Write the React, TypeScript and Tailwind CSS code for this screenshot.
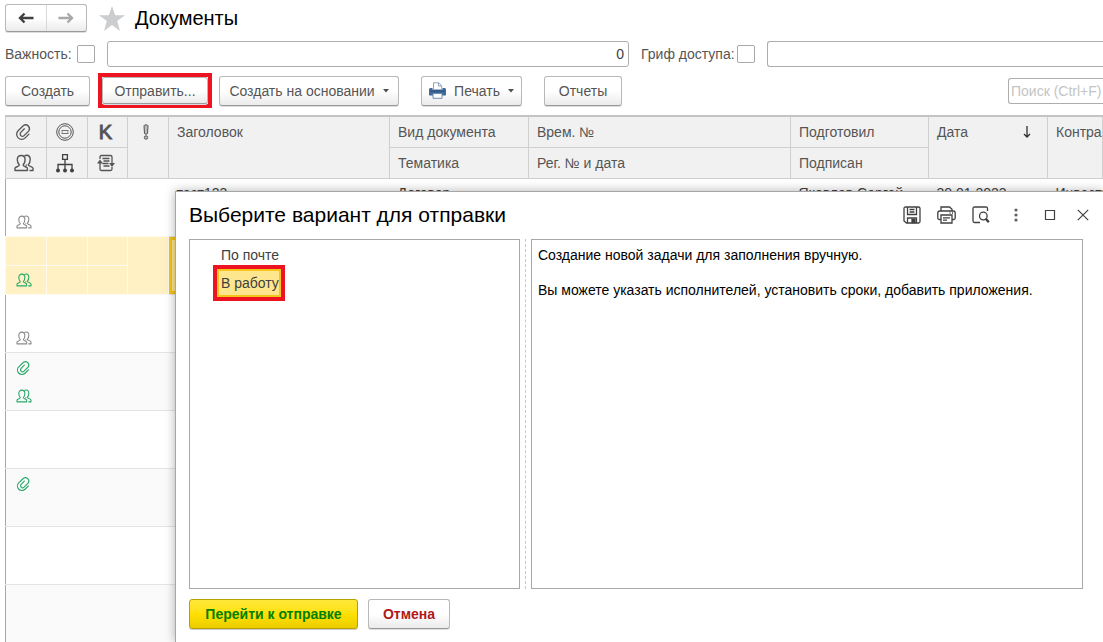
import type { ReactNode } from 'react'
import clsx from 'clsx'

type IconProps = { className?: string }

function ClipIcon({ className }: IconProps) {
  return (
    <svg viewBox="0 0 18 18" className={className} fill="none" stroke="currentColor" strokeWidth="1.3" strokeLinecap="round">
      <path transform="translate(9 9) rotate(45)" d="M5-2V3.300A5 5 0 0 1-5 3.300V-4.200A3.900 3.900 0 0 1 2.600-4.200V2.500A2.300 2.300 0 0 1-2 2.500V-2.500" />
    </svg>
  )
}

function PeopleIcon({ className }: IconProps) {
  return (
    <svg viewBox="0 0 20 18" className={className} fill="none" stroke="currentColor" strokeWidth="1.4" strokeLinejoin="round">
      <path d="M1 16.500v-2.300c0-1.400 4.300-1.500 4.300-3.200C3.900 9.500 3.300 7.800 3.300 5.800c0-2.800 1.500-4.300 3.900-4.300s3.900 1.500 3.900 4.300c0 2-.6 3.700-2 5.200 0 1.700 4.300 1.800 4.300 3.200v2.300z" />
      <path d="M10.500 2c.6-.5 1.300-.7 2.100-.7 2.200 0 3.600 1.500 3.600 4.300 0 2-.6 3.800-1.900 5.300 0 1.200 4.700 1.700 4.700 3.300v2.300h-3.500M12.300 10.500v1.300" />
    </svg>
  )
}

function StampIcon() {
  return (
    <svg viewBox="0 0 18 18" className="size-[18px]" fill="none" stroke="currentColor">
      <circle cx="9" cy="9" r="8.300" />
      <circle cx="9" cy="9" r="6.200" />
      <path d="M5.500 7.500h7M5.500 10.500h7M5.500 9h1.500M11 9h1.500" strokeWidth=".8" />
    </svg>
  )
}

function ImportanceIcon() {
  return (
    <svg viewBox="0 0 6 16" className="h-4 w-1.5" fill="#bdbdbd" stroke="currentColor">
      <path d="M1 1.800c0-1.300 4-1.300 4 0L4.500 9.500c0 .9-3 .9-3 0z" />
      <circle cx="3" cy="13.500" r="1.700" />
    </svg>
  )
}

function TreeIcon() {
  return (
    <svg viewBox="0 0 18 20" className="h-5 w-[18px]" fill="none" stroke="#404040" strokeWidth="1.300">
      <path d="M6.600 1.600h4.800v4.800H6.600zM9 6.500v10M2 16v-4.500h14V16" />
      <g fill="#404040" stroke="none">
        <circle cx="2" cy="17.500" r="2" />
        <circle cx="9" cy="17.500" r="2" />
        <circle cx="16" cy="17.500" r="2" />
      </g>
    </svg>
  )
}

function RouteIcon() {
  return (
    <svg viewBox="0 0 18 18" className="size-[18px]" fill="none" stroke="currentColor" strokeWidth="1.300">
      <path d="M3 5V3c0-1 .5-1.500 1.500-1.500h9c1 0 1.500.5 1.500 1.500v7M15 13v2c0 1-.5 1.500-1.500 1.500h-9c-1 0-1.500-.5-1.500-1.500V8M5.500 4.500h7M6.500 7h6M5.500 9.500h6M6.500 12h6" />
      <path d="M0 9.500l3-4 3 4zM12 9h6l-3 4z" fill="currentColor" stroke="none" />
    </svg>
  )
}

function ArrowLeft({ className }: IconProps) {
  return (
    <svg viewBox="0 0 16 12" className={clsx('h-3 w-4', className)} fill="none" stroke="currentColor" strokeWidth="2.400">
      <path d="M2 6h13.500M6.500 1.500 2 6l4.500 4.500" />
    </svg>
  )
}

function BluePrinter() {
  return (
    <svg viewBox="0 0 17 17" className="size-[17px]">
      <path d="M4.500 7V.8h5.200l3 3V7" fill="#fff" stroke="#8fa5bf" />
      <path d="M9.500.8v3.200h3.200" fill="none" stroke="#8fa5bf" />
      <path d="M1.500 6h2v1.500h10V6h2c.8 0 1.500.6 1.500 1.500v5c0 .6-.4 1-1 1H1c-.6 0-1-.4-1-1v-5C0 6.600.7 6 1.500 6z" fill="#3f6b9c" />
      <path d="M1.500 9h14" stroke="#264f7d" />
      <path d="M4 11.500h9v4.800H4z" fill="#fff" stroke="#6d8db0" />
    </svg>
  )
}

function SaveIcon() {
  return (
    <svg viewBox="0 0 18 18" className="size-[18px]" fill="none" stroke="currentColor" strokeWidth="1.300">
      <path d="M2.500 1h13c1 0 1.500.5 1.500 1.500v13c0 1-.5 1.500-1.500 1.500h-12L1 15V2.500C1 1.500 1.500 1 2.500 1zM4.500 1v7.500h9V1M6.500 3.500h5M6.500 6h5M4.500 17v-5h9v5" />
      <path d="M9 13.500h3v3H9z" fill="currentColor" />
    </svg>
  )
}

function PrintIcon() {
  return (
    <svg viewBox="0 0 19 18" className="h-[18px] w-[19px]" fill="none" stroke="currentColor" strokeWidth="1.300">
      <path d="M4 5V1h8.500L15 3.200V5M4 13.500H2.300C1.300 13.500.8 13 .8 12V7c0-1.300.7-2 2-2h13.400c1.300 0 2 .7 2 2v5c0 1-.5 1.500-1.500 1.500H15" />
      <path d="M4 9h11v8H4zM6 11.800h7M6 14.200h4M12.500 7h1M15 7h1" />
    </svg>
  )
}

function PreviewIcon() {
  return (
    <svg viewBox="0 0 18 18" className="size-[18px]" fill="none" stroke="currentColor" strokeWidth="1.300">
      <path d="M15.500 5V2.500c0-1-.5-1.500-1.500-1.500H2.500C1.500 1 1 1.500 1 2.500v12.500c0 1 .5 1.500 1.500 1.500H8" />
      <circle cx="11.300" cy="10" r="3.800" />
      <path d="m13.800 12.800 3 3.400" strokeWidth="2.400" />
    </svg>
  )
}

function ToolButton({ children, className }: { children: ReactNode; className?: string }) {
  return (
    <button
      className={clsx(
        'flex items-center justify-center rounded-[3px] border border-[#b8b8b8] border-b-[#999] bg-linear-to-b from-white from-50% to-[#ebebeb] shadow-[0_1px_0_#ddd]',
        className,
      )}
    >
      {children}
    </button>
  )
}

function Caret() {
  return (
    <svg viewBox="0 0 6 4" className="h-1 w-1.5" fill="#505050">
      <path d="M0 0h6L3 3.500z" />
    </svg>
  )
}

type Row = { top?: ReactNode; bottom?: ReactNode; selected?: boolean; cells?: string[] }

const green = 'text-[#2aa869]'
const gray = 'text-[#8a8a8a]'

const rows: Row[] = [
  {
    bottom: <PeopleIcon className={clsx('h-3.5 w-4', gray)} />,
    cells: ['тест123', 'Договор', '', 'Яковлев Сергей', '30.01.2023', 'Инвестиции'],
  },
  { bottom: <PeopleIcon className={clsx('h-3.5 w-4', green)} />, selected: true },
  { bottom: <PeopleIcon className={clsx('h-3.5 w-4', gray)} /> },
  {
    top: <ClipIcon className={clsx('size-4', green)} />,
    bottom: <PeopleIcon className={clsx('h-3.5 w-4', green)} />,
  },
  {},
  { top: <ClipIcon className={clsx('size-4', green)} /> },
  {},
  {},
]

const th = 'border border-[#cfcfcf] bg-[#f1f1f1] font-normal text-left align-top overflow-hidden whitespace-nowrap'

function Head({ children, rowSpan, icon }: { children: ReactNode; rowSpan?: number; icon?: boolean }) {
  return (
    <th rowSpan={rowSpan} className={th}>
      <div className={clsx('flex h-[30px] items-center', icon ? 'justify-center pr-1' : 'px-2')}>{children}</div>
    </th>
  )
}

function DocumentsTable() {
  return (
    <table className="w-full table-fixed border-collapse border-l border-[#a8a8a8]">
      <colgroup>
        <col className="w-[41px]" />
        <col className="w-[41px]" />
        <col className="w-[40px]" />
        <col className="w-[41px]" />
        <col className="w-[221px]" />
        <col className="w-[139px]" />
        <col className="w-[262px]" />
        <col className="w-[138px]" />
        <col className="w-[119px]" />
        <col />
      </colgroup>
      <thead className="border-t-2 border-[#c4c4c4] text-[#555]">
        <tr>
          <Head icon><ClipIcon className="size-[18px]" /></Head>
          <Head icon><StampIcon /></Head>
          <Head icon><span className="text-xl [-webkit-text-stroke:1px]">K</span></Head>
          <Head icon rowSpan={2}><ImportanceIcon /></Head>
          <Head rowSpan={2}>Заголовок</Head>
          <Head>Вид документа</Head>
          <Head>Врем. №</Head>
          <Head>Подготовил</Head>
          <Head rowSpan={2}>
            <span className="flex-1">Дата</span>
            <svg viewBox="0 0 8 12" className="mr-2 h-3 w-2" fill="none" stroke="#303030" strokeWidth="1.300">
              <path d="M4 0v11M1 8l3 3 3-3" />
            </svg>
          </Head>
          <Head rowSpan={2}>Контрагент</Head>
        </tr>
        <tr>
          <Head icon><PeopleIcon className="h-[18px] w-5" /></Head>
          <Head icon><TreeIcon /></Head>
          <Head icon><RouteIcon /></Head>
          <Head>Тематика</Head>
          <Head>Рег. № и дата</Head>
          <Head>Подписан</Head>
        </tr>
      </thead>
      {rows.map((row, i) => {
        const cell = row.selected ? 'border border-[#fffaf0] bg-[#fff1c4]' : ''
        const fill = i >= 3 && i % 2 === 1 ? 'bg-[#fafafa]' : 'bg-white'
        return (
          <tbody key={i} className={clsx('border-b border-[#e4e4e4] text-[#404040]', fill)}>
            <tr className="h-[29px]">
              <td className={cell}><div className="flex justify-center pt-0.5 pr-1">{row.top}</div></td>
              <td className={cell} />
              <td className={cell} />
              <td rowSpan={2} className={cell} />
              {[0, 1, 2, 3, 4, 5].map((n) => (
                <td
                  key={n}
                  rowSpan={2}
                  className={clsx(
                    'overflow-hidden px-2 pt-1 align-top whitespace-nowrap',
                    row.selected && 'bg-[#fde68e]',
                    row.selected && n === 0 && 'shadow-[inset_0_0_0_3px_#f5c518]',
                  )}
                >
                  {row.cells?.[n]}
                </td>
              ))}
            </tr>
            <tr className="h-[29px]">
              <td className={cell}><div className="flex justify-center pr-1">{row.bottom}</div></td>
              <td className={cell} />
              <td className={cell} />
            </tr>
          </tbody>
        )
      })}
    </table>
  )
}

function SendDialog() {
  return (
    <section
      role="dialog"
      aria-labelledby="send-title"
      className="absolute top-[191px] right-0 bottom-0 left-[175px] flex flex-col border-t border-l border-[#a6a6a6] bg-white pr-5 pb-[13px] pl-[13px] shadow-[0_0_10px_rgba(0,0,0,0.3)]"
    >
      <header className="flex h-[47px] shrink-0 items-center pb-0.5 text-[#404040]">
        <h2 id="send-title" className="flex-1 text-[21px] text-black">Выберите вариант для отправки</h2>
        <button aria-label="Сохранить" className="mr-4"><SaveIcon /></button>
        <button aria-label="Печать" className="mr-4"><PrintIcon /></button>
        <button aria-label="Просмотр" className="mr-6"><PreviewIcon /></button>
        <button aria-label="Еще" className="mr-[26px]">
          <svg viewBox="0 0 4 14" className="h-3.5 w-1" fill="#606060">
            <circle cx="2" cy="2" r="1.600" />
            <circle cx="2" cy="7" r="1.600" />
            <circle cx="2" cy="12" r="1.600" />
          </svg>
        </button>
        <button aria-label="Развернуть" className="mr-[21px]">
          <svg viewBox="0 0 12 12" className="size-3" fill="none" stroke="currentColor" strokeWidth="1.200">
            <path d="M1.500 1.500h9v9h-9z" />
          </svg>
        </button>
        <button aria-label="Закрыть" className="-mr-1.5">
          <svg viewBox="0 0 12 12" className="size-3" fill="none" stroke="currentColor" strokeWidth="1.200">
            <path d="m.8.8 10.400 10.400M11.200.8.800 11.200" />
          </svg>
        </button>
      </header>
      <div className="flex min-h-0 flex-1">
        <div className="flex w-[331px] flex-col items-start border border-[#a8a8a8] pl-[23px] text-[#404040]">
          <button className="h-[25px] pt-1 pl-2">По почте</button>
          <button className="flex h-9 items-center border-4 border-[#ee1320] whitespace-nowrap">
            <span className="flex h-7 items-center border-2 border-[#f5c518] bg-[#fde68e] pl-0.5">В работу</span>
          </button>
        </div>
        <div className="mr-[5px] ml-[5px] border-l border-dashed border-[#c8c8c8]" />
        <div className="flex-1 border border-[#a8a8a8] px-1.5 pt-1.5 leading-[18px] text-black">
          <p className="mb-[17px]">Создание новой задачи для заполнения вручную.</p>
          <p>Вы можете указать исполнителей, установить сроки, добавить приложения.</p>
        </div>
      </div>
      <footer className="mt-2.5 flex gap-2.5 font-bold">
        <button className="h-[30px] w-[169px] rounded-[3px] border border-[#b5a000] bg-linear-to-b from-[#ffe838] via-[#ffe000] to-[#ebcd00] text-[#008000] shadow-[0_1px_0_#ccc]">
          Перейти к отправке
        </button>
        <ToolButton className="h-[30px] w-[82px] text-[#b01818]">Отмена</ToolButton>
      </footer>
    </section>
  )
}

export default function App() {
  const input = 'h-[26px] border border-[#adadad] bg-white'
  const check = 'size-[18px] shrink-0 appearance-none rounded-[2px] border border-[#a8a8a8] bg-white'

  return (
    <main className="relative h-screen overflow-hidden bg-white pl-[5px] font-['Liberation_Sans',Arial,sans-serif] text-sm text-[#555]">
      {/* Title */}
      <header className="flex h-9 items-center">
        <div className="flex h-7 w-[82px] rounded-[3px] border border-[#b8b8b8] border-b-[#999] bg-linear-to-b from-white from-50% to-[#ebebeb] shadow-[0_1px_0_#ddd]">
          <button aria-label="Назад" className="flex flex-1 items-center justify-center border-r border-[#d8d8d8]">
            <ArrowLeft className="text-[#404040]" />
          </button>
          <button aria-label="Вперед" className="flex flex-1 items-center justify-center">
            <ArrowLeft className="rotate-180 text-[#a8a8a8]" />
          </button>
        </div>
        <svg viewBox="0 0 26 25" className="ml-3 h-[25px] w-[26px]" fill="#cbcdcf">
          <path d="m13 0 3.200 9.200H26l-7.800 5.900L21 25l-8-6-8 6 2.800-9.900L0 9.200h9.800z" />
        </svg>
        <h1 className="ml-2.5 text-xl text-black">Документы</h1>
      </header>

      {/* Filters */}
      <div className="flex h-9 items-center">
        <label htmlFor="importance-on" className="w-[72px]">Важность:</label>
        <input id="importance-on" type="checkbox" className={check} />
        <input aria-label="Важность" defaultValue="0" className={clsx(input, 'ml-3 w-[522px] rounded-[3px] pr-1 text-right text-[#404040]')} />
        <label htmlFor="access-on" className="ml-3 w-[96px] whitespace-nowrap">Гриф доступа:</label>
        <input id="access-on" type="checkbox" className={check} />
        <input aria-label="Гриф доступа" className={clsx(input, 'ml-3 min-w-0 flex-1 rounded-l-[3px] border-r-0')} />
      </div>

      {/* Commands */}
      <div className="flex h-[43px] items-center pb-1.5">
        <ToolButton className="h-[30px] w-[85px]">Создать</ToolButton>
        <div className="ml-2 flex h-[35px] w-[114px] items-center border-4 border-[#ee1320]">
          <ToolButton className="h-[27px] w-full">Отправить...</ToolButton>
        </div>
        <ToolButton className="ml-[7px] h-[30px] w-[180px] gap-2">Создать на основании <Caret /></ToolButton>
        <ToolButton className="ml-[22px] h-[30px] w-[101px] gap-2"><BluePrinter />Печать <Caret /></ToolButton>
        <ToolButton className="ml-[22px] h-[30px] w-[78px]">Отчеты</ToolButton>
        <input aria-label="Поиск" placeholder="Поиск (Ctrl+F)" className={clsx(input, 'ml-auto w-[95px] rounded-l-[3px] border-r-0 pl-0.5 placeholder:text-[#c4c4c4]')} />
      </div>

      <DocumentsTable />
      <SendDialog />
    </main>
  )
}
